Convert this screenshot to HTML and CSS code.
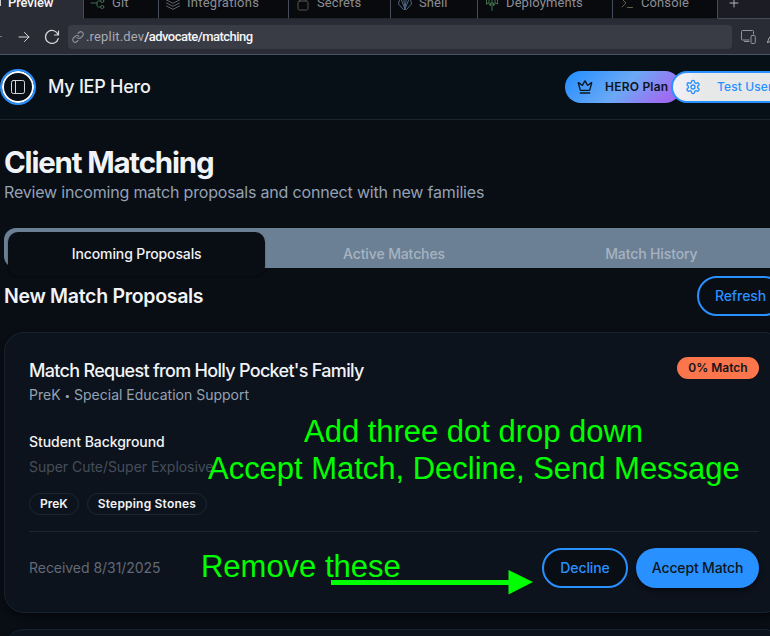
FILE: index.html
```html
<!DOCTYPE html>
<html lang="en">
<head>
<meta charset="utf-8">
<title>Client Matching</title>
<link rel="stylesheet" href="styles.css">
</head>
<body>
<div class="screen">
  <nav class="tabs">
    <div class="tab tab-preview"><i class="cursor"></i><span>Preview</span></div>
    <div class="tab tab-git"><svg class="ti green" width="16" height="16" viewBox="0 0 16 16"><circle cx="12.2" cy="6" r="1.6"/><circle cx="12.2" cy="12" r="1.6"/><path d="M1 8h6M10.5 6H8.5Q7 6 7 7.500v3Q7 12 8.500 12h2"/></svg><span>Git</span></div>
    <div class="tab tab-int"><svg class="ti" width="16" height="16" viewBox="0 0 16 16"><path d="M1.500 5L8 8.300 14.500 5 8 1.500zM1.500 8L8 11.300 14.500 8M1.500 11L8 14.300 14.500 11"/></svg><span>Integrations</span></div>
    <div class="tab tab-sec"><svg class="ti" width="16" height="16" viewBox="0 0 16 16"><rect x="3" y="6" width="10" height="9" rx="1.500"/><path d="M5 6V4q0-3 3-3t3 3v2"/></svg><span>Secrets</span></div>
    <div class="tab tab-shell"><svg class="ti blue" width="16" height="16" viewBox="0 0 16 16"><path d="M8 14.500H6.500L1.500 9Q2 2 8 2t6.500 7L9.500 14.500zM8 14L4 4M8 14L6.500 2M8 14L9.500 2M8 14l4-10"/></svg><span>Shell</span></div>
    <div class="tab tab-dep"><svg class="ti green" width="16" height="16" viewBox="0 0 16 16"><path d="M2.500 9V5Q8-1 13.500 5v4l-2-1-2 3V8H6.500v3l-2-3zM8 8v7.500M5 5v3M8 3v5M11 5v3"/></svg><span>Deployments</span></div>
    <div class="tab tab-con"><svg class="ti olive" width="16" height="16" viewBox="0 0 16 16"><path d="M3 4l4 4-4 4M8.500 12.500h5"/></svg><span>Console</span></div>
    <div class="tab tab-new"><svg width="10" height="10" viewBox="0 0 10 10"><path d="M5 1v8M1 5h8"/></svg></div>
  </nav>
  <div class="address">
    <i class="back"></i>
    <svg class="nav forward" width="14" height="14" viewBox="0 0 14 14"><path d="M2 7h10M7.500 2.500L12 7l-4.500 4.500"/></svg>
    <svg class="nav reload" width="16" height="16" viewBox="0 0 16 16"><path d="M14.500 2v4h-4M14.200 6A6.500 6.500 0 1 0 14.300 9.500"/></svg>
    <div class="url">
      <svg class="link" width="12" height="12" viewBox="0 0 24 24"><path d="M10 13a5 5 0 0 0 7.500.5l4-4a5 5 0 0 0-7-7L12 5M14 11a5 5 0 0 0-7.500-.5l-4 4a5 5 0 0 0 7 7L12 19"/></svg>
      <span class="host">.replit.dev</span><span class="path">/advocate/matching</span>
    </div>
    <svg class="device" width="15" height="14" viewBox="0 0 15 14"><path d="M8 10H1.500q-1 0-1-1V1.500q0-1 1-1h10q1 0 1 1V4M3.500 11.500H8"/><rect x="10" y="5.500" width="4.300" height="8" rx="1"/></svg>
    <svg class="pencil" width="10" height="12" viewBox="0 0 10 12"><path d="M.5 11.500L2 7l6-6M.5 11.500L5 10"/></svg>
  </div>

  <header class="header">
    <button class="menu"><svg width="16" height="16" viewBox="0 0 16 16"><rect x="1.500" y="1.500" width="13" height="13" rx="1.800"/><path d="M5.500 1.500v13"/></svg></button>
    <span class="brand">My IEP Hero</span>
    <div class="plan"><svg width="16" height="16" viewBox="0 0 24 24"><path d="M11.562 3.266a.5.5 0 0 1 .876 0L15.390 8.870a1 1 0 0 0 1.516.294L21.183 5.500a.5.5 0 0 1 .798.519l-2.834 10.246a1 1 0 0 1-.956.734H5.810a1 1 0 0 1-.957-.734L2.020 6.020a.5.5 0 0 1 .798-.519l4.276 3.664a1 1 0 0 0 1.516-.294zM5 21h14"/></svg><span>HERO Plan</span></div>
    <div class="user"><svg width="16" height="16" viewBox="0 0 24 24"><path d="M12.220 2h-.44a2 2 0 0 0-2 2v.18a2 2 0 0 1-1 1.730l-.43.25a2 2 0 0 1-2 0l-.15-.08a2 2 0 0 0-2.730.73l-.22.38a2 2 0 0 0 .73 2.730l.15.1a2 2 0 0 1 1 1.720v.51a2 2 0 0 1-1 1.740l-.15.09a2 2 0 0 0-.73 2.730l.22.38a2 2 0 0 0 2.730.73l.15-.08a2 2 0 0 1 2 0l.43.25a2 2 0 0 1 1 1.730V20a2 2 0 0 0 2 2h.44a2 2 0 0 0 2-2v-.18a2 2 0 0 1 1-1.730l.43-.25a2 2 0 0 1 2 0l.15.08a2 2 0 0 0 2.730-.73l.22-.39a2 2 0 0 0-.73-2.730l-.15-.08a2 2 0 0 1-1-1.740v-.5a2 2 0 0 1 1-1.740l.15-.09a2 2 0 0 0 .73-2.730l-.22-.38a2 2 0 0 0-2.730-.73l-.15.08a2 2 0 0 1-2 0l-.43-.25a2 2 0 0 1-1-1.730V4a2 2 0 0 0-2-2z"/><circle cx="12" cy="12" r="3"/></svg><span>Test User</span></div>
  </header>

  <main class="main">
    <h1>Client Matching</h1>
    <p class="lead">Review incoming match proposals and connect with new families</p>
    <div class="segments">
      <div class="segment active">Incoming Proposals</div>
      <div class="segment">Active Matches</div>
      <div class="segment">Match History</div>
    </div>
    <div class="section-head"><h2>New Match Proposals</h2><button class="outline refresh">Refresh</button></div>
    <article class="card">
      <div class="card-head">
        <div><h3>Match Request from Holly Pocket's Family</h3><p class="sub">PreK <span class="dot">•</span> Special Education Support</p></div>
        <span class="badge">0% Match</span>
      </div>
      <h4>Student Background</h4>
      <p class="bio">Super Cute/Super Explosive</p>
      <div class="pills"><span class="pill">PreK</span><span class="pill">Stepping Stones</span></div>
      <footer class="card-foot">
        <span class="received">Received 8/31/2025</span>
        <button class="outline decline">Decline</button>
        <button class="accept">Accept Match</button>
      </footer>
    </article>
    <article class="card next"></article>
  </main>

  <div class="note note-menu">Add three dot drop down</div>
  <div class="note note-items">Accept Match, Decline, Send Message</div>
  <div class="note note-remove">Remove these</div>
  <svg class="arrow" width="203" height="26" viewBox="0 0 203 26"><path d="M0 10H177.500V0L202 12 177.500 24.500V15H0z"/></svg>
</div>
</body>
</html>
```

FILE: styles.css
```css
* { box-sizing: border-box; }
body { margin: 0; background: #090d14; font-family: Inter, sans-serif; }
h1, h2, h3, h4, p { margin: 0; }
button { font: inherit; padding: 0; }
svg { fill: none; flex: none; stroke: currentColor; stroke-linecap: round; stroke-linejoin: round; }
.screen { position: relative; width: 770px; height: 636px; overflow: hidden; }

.tabs { display: flex; height: 19px; overflow: hidden; background: #090a0d; font: 400 13px/16px Roboto, sans-serif; color: #8b8e94; }
.tab { display: flex; flex: none; height: 19px; align-items: flex-start; border-right: 1px solid #454c5d; border-bottom: 1px solid #22242d; white-space: nowrap; }
.tab span { margin-top: -5px; letter-spacing: .1px; }
.tab-preview { width: 84px; background: #2a2c35; border-bottom-color: #2a2c35; color: #f5f6f7; font-weight: 500; }
.tab-preview span { margin-left: 7px; letter-spacing: -.1px; }
.cursor { width: 1px; height: 6px; background: #ccc; }
.tab-git { width: 75px; padding-left: 6px; }
.tab-int { width: 130px; padding-left: 6px; }
.tab-int span { letter-spacing: .25px; }
.tab-sec { width: 102px; padding-left: 6px; }
.tab-shell { width: 87px; padding-left: 6px; }
.tab-dep { width: 135px; padding-left: 6px; }
.tab-con { width: 105px; padding-left: 6px; }
.tab-new { flex: 1; padding-left: 11px; color: #b1b3b9; background: #1b1c24; border-right: 0; border-bottom-color: #454c5d; }
.tab-new svg { margin-top: -2px; }
.ti { margin: -5px 6px 0 0; color: #5d6167; }
.ti.green { color: #3f6d4c; }
.ti.blue { color: #4d6480; }
.tab-sec .ti { color: #555; }
.ti.olive { color: #65623f; }

.address { display: flex; align-items: center; height: 36px; background: #2a2c35; border-bottom: 1px solid #4b5265; }
.back { flex: none; width: 2px; height: 1px; background: #777a82; }
.nav { color: #d5d7da; }
.forward { margin-left: 15px; }
.reload { margin: 0 8px 0 13px; stroke-width: 1.2; }
.url { display: flex; flex: none; align-items: center; width: 664px; height: 24px; border-radius: 4px; margin-top: 1px; background: #3a3c45; font: 500 13px/24px Roboto, sans-serif; }
.link { margin: 0 2px 0 4px; color: #8d9097; stroke-width: 2.2; }
.host { font-weight: 400; color: #a7aab0; letter-spacing: .17px; }
.path { color: #f5f6f7; letter-spacing: -.53px; }
.device { margin-left: 9px; color: #92959c; }
.pencil { margin-left: 11px; color: #aaa; }

.header { display: flex; align-items: center; height: 65px; border-bottom: 1px solid #19242d; background: #081017; }
.menu { display: grid; place-items: center; width: 36px; height: 36px; flex: none; border: 2px solid #2990ff; border-radius: 50%; background: #090d14; box-shadow: inset 0 0 0 2px #fff; color: #d5d7db; }
.brand { flex: none; width: 517px; padding-left: 12px; font-size: 18px; font-weight: 550; line-height: 28px; letter-spacing: -.25px; color: #f0f2f6; }
.plan { display: flex; align-items: center; flex: none; width: 116px; height: 32px; padding-left: 12px; gap: 12px; border-radius: 16px; margin-left: 12px; background: linear-gradient(135deg, #2990ff 5%, #6ba9f5 50%, #9b72f2 83%, #9b62ef); color: #0b1621; font-size: 12px; font-weight: 600; letter-spacing: .22px; white-space: nowrap; }
.plan svg { stroke-width: 2; }
.user { position: relative; display: flex; align-items: center; flex: none; width: 132px; height: 32px; margin-left: -10px; padding-left: 12px; gap: 16px; border: 2px solid #2990ff; border-radius: 16px; background: linear-gradient(90deg, #f3f0f8, #e7e8e8 25%, #e6e7e9); color: #2990ff; font-size: 12px; font-weight: 500; letter-spacing: .1px; white-space: nowrap; }
.user svg { stroke-width: 2; }
.plan span, .user span { margin-top: -1px; }

.main { width: 784px; padding: 24px 0 0 4px; }
h1 { font-size: 29.5px; font-weight: 700; line-height: 37px; height: 36px; letter-spacing: -1.2px; color: #f1f3f7; }
.lead { font-size: 16px; line-height: 24px; letter-spacing: -.18px; color: #94a2b4; }
.segments { display: grid; grid-template-columns: repeat(3, 1fr); height: 40px; padding: 4px; margin-top: 24px; background: #6b8095; border-radius: 12px 12px 0 12px; }
.segment { display: flex; align-items: center; justify-content: center; height: 44px; padding-bottom: 1px; border-radius: 10px; color: #a7b3c1; font-size: 14px; font-weight: 500; letter-spacing: -.12px; }
.segment.active { background: #090d14; color: #f1f3f7; box-shadow: 0 1px 2px #0005; }
.section-head { display: flex; align-items: center; justify-content: space-between; margin-top: 8px; }
h2 { font-size: 19.5px; font-weight: 600; line-height: 28px; letter-spacing: -.3px; color: #f1f3f7; }
.outline { height: 40px; padding-bottom: 1px; border: 2px solid #2990ff; border-radius: 20px; background: #090d14; color: #2990ff; font-size: 14px; font-weight: 500; letter-spacing: -.1px; }
.refresh { width: 87px; }
.card { height: 281px; margin-top: 16px; padding: 24px; border: 1px solid #172430; border-radius: 20px; background: #0d131c; box-shadow: 0 4px 6px #0006; }
.card-head { display: flex; align-items: flex-start; justify-content: space-between; height: 50px; }
h3 { font-size: 18px; font-weight: 550; line-height: 28px; letter-spacing: -.7px; color: #f1f3f7; }
.sub { font-size: 14px; line-height: 20px; color: #94a2b4; }
.dot { font-size: 10px; vertical-align: 1px; }
.badge { width: 82px; height: 22px; border-radius: 11px; background: #fb764c; color: #15151a; font-size: 12px; font-weight: 600; line-height: 22px; text-align: center; }
h4 { margin-top: 25px; font-size: 14px; font-weight: 500; line-height: 20px; letter-spacing: -.05px; color: #f1f3f7; }
.bio { margin-top: 5px; font-size: 14px; line-height: 20px; letter-spacing: -.04px; color: #454e5b; }
.pills { display: flex; gap: 8px; margin-top: 16px; }
.pill { height: 22px; padding: 0 10px; border: 1px solid #1a2632; border-radius: 11px; color: #f1f3f7; font-size: 12px; font-weight: 600; line-height: 20px; }
.pill + .pill { letter-spacing: .2px; }
.card-foot { display: flex; align-items: center; gap: 8px; margin-top: 16px; padding-top: 16px; border-top: 1px solid #1a2632; }
.received { flex: 1; margin-top: -1px; font-size: 14px; letter-spacing: -.04px; color: #626976; }
.decline { width: 86px; }
.accept { width: 123px; height: 40px; padding-bottom: 1px; border: 0; border-radius: 20px; background: #2990ff; color: #0b1621; font-size: 14px; font-weight: 500; letter-spacing: -.15px; box-shadow: 0 3px 5px #0007; }

.note { position: absolute; color: #0f0; font: 31px/36px "Liberation Sans", Arial, sans-serif; letter-spacing: -.02px; white-space: nowrap; }
.note-menu { left: 304px; top: 414px; }
.note-items { left: 208px; top: 451px; }
.note-remove { left: 201px; top: 549px; }
.arrow { position: absolute; left: 331px; top: 570px; fill: #0f0; stroke: none; }
```
